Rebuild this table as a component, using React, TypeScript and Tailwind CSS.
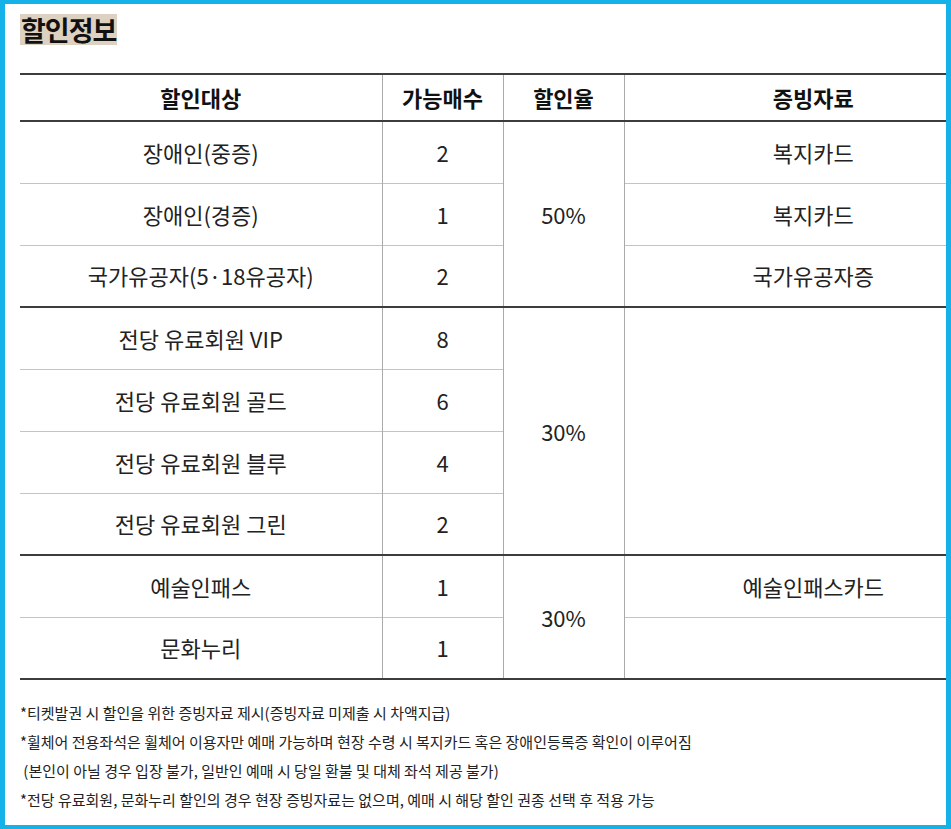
import React from 'react';

type Row = {
  target: string;
  count: string;
  rate?: { text: string; span: number };
  proof?: { text: string; span: number };
  thick?: boolean;
};

const rows: Row[] = [
  { target: '장애인(중증)', count: '2', rate: { text: '50%', span: 3 }, proof: { text: '복지카드', span: 1 } },
  { target: '장애인(경증)', count: '1', proof: { text: '복지카드', span: 1 } },
  { target: '국가유공자(5·18유공자)', count: '2', proof: { text: '국가유공자증', span: 1 }, thick: true },
  { target: '전당 유료회원 VIP', count: '8', rate: { text: '30%', span: 4 }, proof: { text: '', span: 4 } },
  { target: '전당 유료회원 골드', count: '6' },
  { target: '전당 유료회원 블루', count: '4' },
  { target: '전당 유료회원 그린', count: '2', thick: true },
  { target: '예술인패스', count: '1', rate: { text: '30%', span: 2 }, proof: { text: '예술인패스카드', span: 1 } },
  { target: '문화누리', count: '1', proof: { text: '', span: 1 }, thick: true },
];

const notes = [
  '*티켓발권 시 할인을 위한 증빙자료 제시(증빙자료 미제출 시 차액지급)',
  '*휠체어 전용좌석은 휠체어 이용자만 예매 가능하며 현장 수령 시 복지카드 혹은 장애인등록증 확인이 이루어짐',
  '\u00a0(본인이 아닐 경우 입장 불가, 일반인 예매 시 당일 환불 및 대체 좌석 제공 불가)',
  '*전당 유료회원, 문화누리 할인의 경우 현장 증빙자료는 없으며, 예매 시 해당 할인 권종 선택 후 적용 가능',
];

export default function App() {
  return (
    <div
      className="w-[951px] h-[829px] bg-white border-x-[5px] border-y-[4px] border-[#15b2ea] overflow-hidden text-[#222]"
      style={{ fontFamily: '"Noto Sans CJK KR", "Noto Sans", sans-serif' }}
    >
      <div className="pl-[15px] pt-[10px]">
        <h2 className="inline-block bg-[#ddd2c1] px-[1px] text-[27px] font-bold leading-[31px] tracking-[-1px] text-[#111]">
          할인정보
        </h2>
      </div>

      <table className="ml-[15px] mt-[27px] w-[982px] table-fixed border-collapse text-[22px]">
        <colgroup>
          <col className="w-[362px]" />
          <col className="w-[121px]" />
          <col className="w-[121px]" />
          <col className="w-[378px]" />
        </colgroup>
        <thead>
          <tr className="h-[47px] border-y-2 border-[#3d3d3d] text-[22px] text-[#111]">
            <th className="border-r border-[#aaa] font-bold">할인대상</th>
            <th className="border-r border-[#aaa] font-bold">가능매수</th>
            <th className="border-r border-[#aaa] font-bold">할인율</th>
            <th className="font-bold">증빙자료</th>
          </tr>
        </thead>
        <tbody>
          {rows.map((r, i) => (
            <tr
              key={i}
              className={
                r.thick
                  ? 'h-[62px] border-b-2 border-b-[#3d3d3d]'
                  : 'h-[62px] border-b border-b-[#c4c4c4]'
              }
            >
              <td className="border-r border-[#aaa] text-center">{r.target}</td>
              <td className="border-r border-[#aaa] text-center">{r.count}</td>
              {r.rate && (
                <td rowSpan={r.rate.span} className="border-r border-[#aaa] text-center">
                  {r.rate.text}
                </td>
              )}
              {r.proof && (
                <td rowSpan={r.proof.span} className="text-center">
                  {r.proof.text}
                </td>
              )}
            </tr>
          ))}
        </tbody>
      </table>

      <div className="pl-[15px] pt-[18px] text-[15px] leading-[29px] text-[#222]">
        {notes.map((n, i) => (
          <p key={i}>{n}</p>
        ))}
      </div>
    </div>
  );
}
